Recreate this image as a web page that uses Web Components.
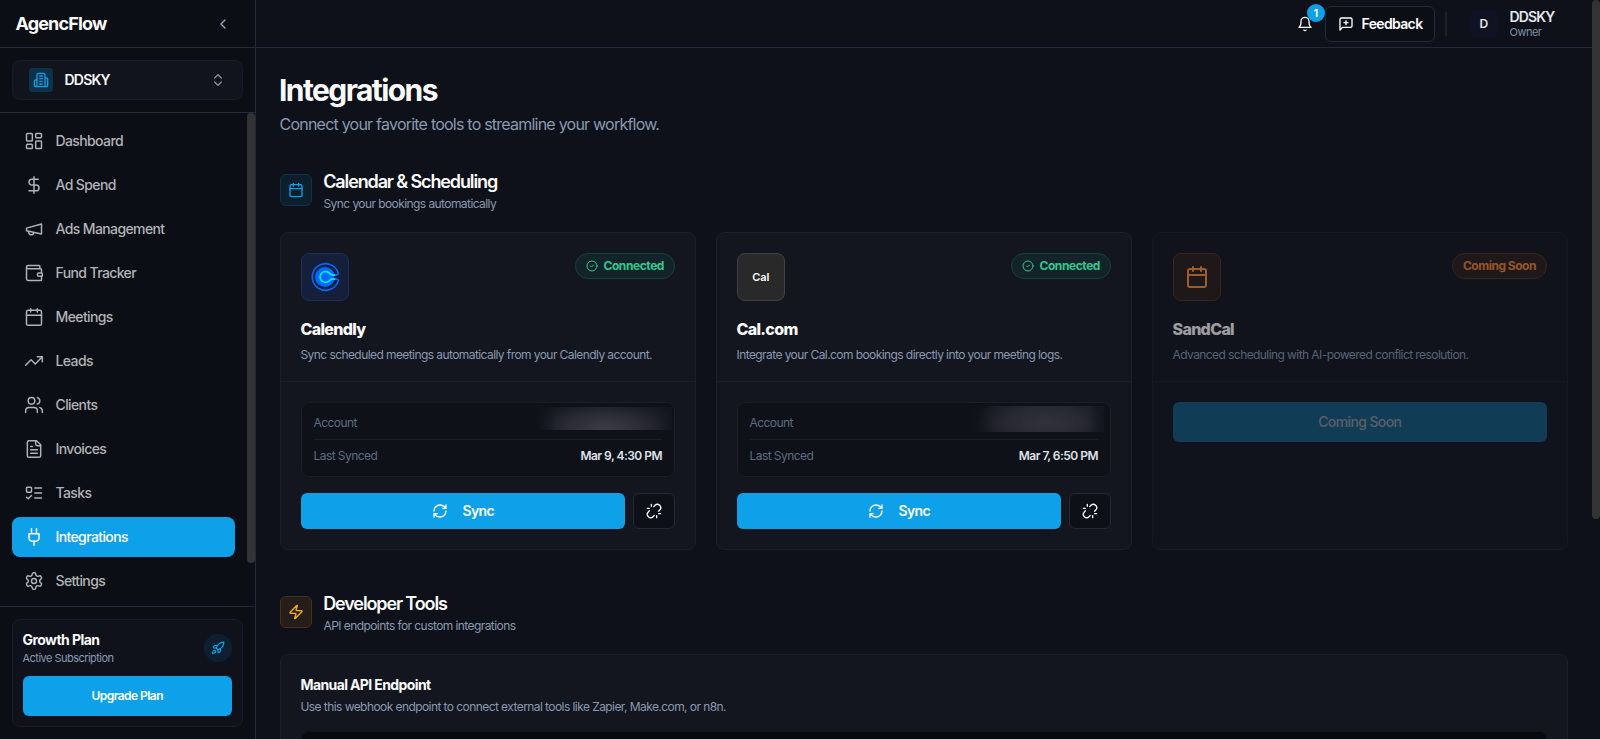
<!DOCTYPE html>
<html lang="en">
<head>
<meta charset="utf-8">
<title>AgencFlow – Integrations</title>
<style>
html,body{margin:0;height:100%;overflow:hidden}
body{background:#0e1119;color:#fafafa;font-family:Inter,"Liberation Sans",sans-serif;font-size:14px;line-height:20px;letter-spacing:-.046em;text-indent:-.5px}
</style>
</head>
<body>
<app-shell></app-shell>
<script>
const ICONS={
dashboard:'<rect width="7" height="9" x="3" y="3" rx="1"/><rect width="7" height="5" x="14" y="3" rx="1"/><rect width="7" height="9" x="14" y="12" rx="1"/><rect width="7" height="5" x="3" y="16" rx="1"/>',
dollar:'<path d="M12 2v20M17 5H9.5a3.5 3.5 0 0 0 0 7h5a3.5 3.5 0 0 1 0 7H6"/>',
megaphone:'<path d="m3 11 18-5v12L3 14v-3z"/><path d="M11.6 16.8a3 3 0 1 1-5.8-1.6"/>',
wallet:'<path d="M19 7V4a1 1 0 0 0-1-1H5a2 2 0 0 0 0 4h15a1 1 0 0 1 1 1v4h-3a2 2 0 0 0 0 4h3a1 1 0 0 0 1-1v-2a1 1 0 0 0-1-1"/><path d="M3 5v14a2 2 0 0 0 2 2h15a1 1 0 0 0 1-1v-4"/>',
calendar:'<path d="M8 2v4M16 2v4M3 10h18"/><rect width="18" height="18" x="3" y="4" rx="2"/>',
trending:'<path d="M22 7 13.5 15.5 8.5 10.5 2 17"/><path d="M16 7h6v6"/>',
users:'<path d="M16 21v-2a4 4 0 0 0-4-4H6a4 4 0 0 0-4 4v2"/><circle cx="9" cy="7" r="4"/><path d="M22 21v-2a4 4 0 0 0-3-3.87M16 3.13a4 4 0 0 1 0 7.75"/>',
file:'<path d="M15 2H6a2 2 0 0 0-2 2v16a2 2 0 0 0 2 2h12a2 2 0 0 0 2-2V7Z"/><path d="M14 2v4a2 2 0 0 0 2 2h4M10 9H8M16 13H8M16 17H8"/>',
todo:'<rect x="3" y="5" width="6" height="6" rx="1"/><path d="m3 17 2 2 4-4M13 6h8M13 12h8M13 18h8"/>',
plug:'<path d="M12 22v-5M9 8V2M15 8V2M18 8v5a4 4 0 0 1-4 4h-4a4 4 0 0 1-4-4V8Z"/>',
settings:'<path d="M12.22 2h-.44a2 2 0 0 0-2 2v.18a2 2 0 0 1-1 1.73l-.43.25a2 2 0 0 1-2 0l-.15-.08a2 2 0 0 0-2.73.73l-.22.38a2 2 0 0 0 .73 2.73l.15.1a2 2 0 0 1 1 1.72v.51a2 2 0 0 1-1 1.74l-.15.09a2 2 0 0 0-.73 2.73l.22.38a2 2 0 0 0 2.73.73l.15-.08a2 2 0 0 1 2 0l.43.25a2 2 0 0 1 1 1.73V20a2 2 0 0 0 2 2h.44a2 2 0 0 0 2-2v-.18a2 2 0 0 1 1-1.73l.43-.25a2 2 0 0 1 2 0l.15.08a2 2 0 0 0 2.73-.73l.22-.39a2 2 0 0 0-.73-2.73l-.15-.08a2 2 0 0 1-1-1.74v-.5a2 2 0 0 1 1-1.74l.15-.09a2 2 0 0 0 .73-2.73l-.22-.38a2 2 0 0 0-2.73-.73l-.15.08a2 2 0 0 1-2 0l-.43-.25a2 2 0 0 1-1-1.73V4a2 2 0 0 0-2-2z"/><circle cx="12" cy="12" r="3"/>',
building:'<path d="M6 22V4a2 2 0 0 1 2-2h8a2 2 0 0 1 2 2v18ZM6 12H4a2 2 0 0 0-2 2v6a2 2 0 0 0 2 2h2M18 9h2a2 2 0 0 1 2 2v9a2 2 0 0 1-2 2h-2M10 6h4M10 10h4M10 14h4M10 18h4"/>',
left:'<path d="m15 18-6-6 6-6"/>',
updown:'<path d="m7 15 5 5 5-5M7 9l5-5 5 5"/>',
rocket:'<path d="M4.5 16.5c-1.5 1.26-2 5-2 5s3.74-.5 5-2c.71-.84.7-2.13-.09-2.91a2.18 2.18 0 0 0-2.91-.09zM12 15l-3-3a22 22 0 0 1 2-3.95A12.88 12.88 0 0 1 22 2c0 2.72-.78 7.5-6 11a22.35 22.35 0 0 1-4 2z"/><path d="M9 12H4s.55-3.03 2-4c1.62-1.08 5 0 5 0M12 15v5s3.03-.55 4-2c1.08-1.62 0-5 0-5"/>',
bell:'<path d="M6 8a6 6 0 0 1 12 0c0 7 3 9 3 9H3s3-2 3-9M10.3 21a1.94 1.94 0 0 0 3.4 0"/>',
feedback:'<path d="M21 15a2 2 0 0 1-2 2H7l-4 4V5a2 2 0 0 1 2-2h14a2 2 0 0 1 2 2zM12 7v6M9 10h6"/>',
refresh:'<path d="M3 12a9 9 0 0 1 9-9 9.75 9.75 0 0 1 6.74 2.74L21 8M21 3v5h-5M21 12a9 9 0 0 1-9 9 9.75 9.75 0 0 1-6.74-2.74L3 16M8 16H3v5"/>',
unlink:'<path d="m18.84 12.25 1.72-1.71h-.02a5.004 5.004 0 0 0-.12-7.07 5.006 5.006 0 0 0-6.95 0l-1.72 1.71M5.17 11.75l-1.71 1.71a5.004 5.004 0 0 0 .12 7.07 5.006 5.006 0 0 0 6.95 0l1.71-1.71M8 2v3M2 8h3M16 19v3M19 16h3"/>',
zap:'<path d="M4 14a1 1 0 0 1-.78-1.63l9.9-10.2a.5.5 0 0 1 .86.46l-1.92 6.02A1 1 0 0 0 13 10h7a1 1 0 0 1 .78 1.63l-9.9 10.2a.5.5 0 0 1-.86-.46l1.92-6.02A1 1 0 0 0 11 14z"/>',
check:'<circle cx="12" cy="12" r="10"/><path d="m9 12 2 2 4-4"/>'
};

/* Small helper: every component provides its own styles and markup. */
const define=(name,css,html)=>customElements.define(name,class extends HTMLElement{
  connectedCallback(){
    if(this.shadowRoot)return;
    const attr=(k,d='')=>this.getAttribute(k)??d;
    this.attachShadow({mode:'open'}).innerHTML=`<style>*{box-sizing:border-box}:host{box-sizing:border-box}${css}</style>${typeof html==='function'?html(attr):html}`;
  }
});

define('ui-icon',':host{display:block;flex:none}svg{display:block;fill:none;stroke:currentColor;stroke-linecap:round;stroke-linejoin:round}',
a=>`<svg width="${a('size','16')}" height="${a('size','16')}" viewBox="0 0 24 24" stroke-width="${a('stroke','2')}">${ICONS[a('name')]}</svg>`);

define('scroll-thumb',':host{display:block;width:8px;flex:none}div{width:8px;border-radius:4px;background:#333}',
a=>`<div style="height:${a('length')}px"></div>`);

define('nav-item',`:host{display:flex;flex:none;align-items:center;gap:12px;height:40px;padding:0 12px;border-radius:8px;color:#b2b3b6;font-weight:500;letter-spacing:-.044em}
:host([active]){background:#0ea1e9;color:#fff}`,
a=>`<ui-icon name="${a('icon')}" size="20" stroke="1.75"></ui-icon><span><slot></slot></span>`);

define('ui-button',`:host{display:flex;align-items:center;justify-content:center;height:40px;border-radius:6px;background:#0ea1e9;color:#fff;font-weight:600}`,'<slot></slot>');

define('workspace-picker',`:host{display:block;padding:12px;border-bottom:1px solid #212b3b}
.box{display:flex;align-items:center;height:40px;padding:0 16px;border:1px solid #1b1c2b;border-radius:8px;background:#11131d}
.ic{display:grid;place-items:center;width:24px;height:24px;border-radius:4px;background:#0c3148;color:#0ea1e9}
.n{flex:1;margin-left:12px;font-weight:600;letter-spacing:-.056em}
.ud{color:#8d8e94}`,
'<div class="box"><div class="ic"><ui-icon name="building"></ui-icon></div><div class="n">DDSKY</div><ui-icon class="ud" name="updown"></ui-icon></div>');

define('plan-card',`:host{display:block;padding:12px;border-top:1px solid #212b3b}
.box{border:1px solid #1b1c2b;border-radius:8px;background:#10121b;padding:10px}
.row{display:flex;justify-content:space-between;align-items:center;height:36px;margin-bottom:10px}
.t{font-weight:700;line-height:20px;letter-spacing:-.0395em}
.s{font-size:11px;line-height:16px;color:#8999af;letter-spacing:-.048em}
.r{display:grid;place-items:center;width:28px;height:28px;border-radius:50%;background:#0e202f;color:#0ea1e9}
ui-button{font-size:12px;letter-spacing:-.046em}`,
'<div class="box"><div class="row"><div><div class="t">Growth Plan</div><div class="s">Active Subscription</div></div><div class="r"><ui-icon name="rocket" size="14"></ui-icon></div></div><ui-button>Upgrade Plan</ui-button></div>');

define('side-bar',`:host{display:flex;flex-direction:column;width:256px;flex:none;background:#0b0e15;border-right:1px solid #212b3b}
.brand{display:flex;align-items:center;justify-content:space-between;height:48px;padding:0 24px 0 16px;border-bottom:1px solid #212b3b}
.brand b{font-size:18px;font-weight:700;letter-spacing:-.047em}
.brand ui-icon{color:#94a3b8}
.mid{flex:1;display:flex;min-height:0;overflow:hidden}
nav{flex:1;display:flex;flex-direction:column;gap:4px;padding:8px 12px}`,
`<div class="brand"><b>AgencFlow</b><ui-icon name="left"></ui-icon></div>
<workspace-picker></workspace-picker>
<div class="mid"><nav>
<nav-item icon="dashboard">Dashboard</nav-item>
<nav-item icon="dollar">Ad Spend</nav-item>
<nav-item icon="megaphone">Ads Management</nav-item>
<nav-item icon="wallet">Fund Tracker</nav-item>
<nav-item icon="calendar">Meetings</nav-item>
<nav-item icon="trending">Leads</nav-item>
<nav-item icon="users">Clients</nav-item>
<nav-item icon="file">Invoices</nav-item>
<nav-item icon="todo">Tasks</nav-item>
<nav-item icon="plug" active>Integrations</nav-item>
<nav-item icon="settings">Settings</nav-item>
</nav><scroll-thumb length="450"></scroll-thumb></div>
<plan-card></plan-card>`);

define('top-bar',`:host{display:flex;align-items:center;justify-content:flex-end;height:48px;padding-right:37px;border-bottom:1px solid #212b3b}
.bell{position:relative;padding:8px;margin-right:4px}
.badge{position:absolute;top:-4px;left:18px;width:18px;height:18px;border-radius:50%;background:#0ea1e9;color:#fff;font-size:10px;font-weight:700;line-height:18px;text-align:center;letter-spacing:0;text-indent:0}
.fb{display:flex;align-items:center;gap:8px;height:36px;width:110px;padding:0 12px;border:1px solid #212b3b;border-radius:6px;background:#0b0e15;font-weight:600;letter-spacing:-.046em;color:#fff}
.sep{width:2px;height:24px;margin:0 23px 0 10px;background:#1b222e}
.av{display:grid;place-items:center;width:28px;height:28px;border-radius:4px;background:#0f1223;font-size:12px;font-weight:600;letter-spacing:0;color:#e4e6ea}
.u{margin-left:12px;width:45px;padding-top:1px}
.u b{display:block;font-weight:600;line-height:17px;letter-spacing:-.06em;color:#e6e8ec}
.u span{display:block;font-size:11px;line-height:15px;color:#7f8ea3;letter-spacing:-.046em}`,
`<div class="bell"><ui-icon name="bell"></ui-icon><div class="badge">1</div></div>
<div class="fb"><ui-icon name="feedback"></ui-icon><span>Feedback</span></div>
<div class="sep"></div><div class="av">D</div><div class="u"><b>DDSKY</b><span>Owner</span></div>`);

define('section-head',`:host{display:flex;align-items:center;gap:12px;height:44px;margin-bottom:20px}
.ic{display:grid;place-items:center;width:32px;height:32px;border-radius:6px;border:1px solid #0d3449;background:#0d1e2c;color:#0ea1e9}
:host([tone=amber]) .ic{border-color:#45321a;background:#241d19;color:#f8b01e}
h2{margin:0;font-size:18px;font-weight:600;line-height:28px;letter-spacing:-.0625em;text-indent:-.8px}
p{margin:0;font-size:12px;line-height:16px;color:#8999af;letter-spacing:-.048em}`,
a=>`<div class="ic"><ui-icon name="${a('icon')}"></ui-icon></div><div><h2><slot></slot></h2><p><slot name="sub"></slot></p></div>`);

define('status-pill',`:host{display:flex;align-items:center;gap:6px;height:26px;padding:0 10px;border-radius:13px;border:1px solid #14433f;background:#122429;color:#34c98f;font-size:12px;font-weight:700;letter-spacing:-.036em}
:host([tone=orange]){border-color:#5c3018;background:#2b1d1c;color:#ed8430;letter-spacing:-.04em}`,'<slot></slot>');

define('app-logo',`:host{display:grid;place-items:center;width:48px;height:48px;border-radius:8px;border:1px solid #1b3059;background:#151f3a}
:host([kind=cal]){background:#292929;border-color:#414144}
:host([kind=sand]){background:#2b1d1b;border-color:#5c3018;color:#ff8f33}
svg{display:block}.w{font-size:11px;font-weight:600;letter-spacing:-.01em;line-height:16px}`,
a=>({calendly:`<svg width="46" height="46" viewBox="1 1 46 46" fill="none" stroke-linecap="round" stroke-linejoin="round"><circle cx="24" cy="24" r="10" fill="#006bff"/><path d="M33 21.2 40 20v7.8l-7-1.2z" fill="#151f3a"/><path d="M34.3 21.9c-2 .7-3.5.3-4.9-.9C28.2 19.900 27 18.700 25 18.700h-.7a5.300 5.300 0 0 0 0 10.600h.7c2 0 3.200-1.200 4.400-2.300 1.400-1.200 2.900-1.600 4.900-.9" stroke="#0ae8f0" stroke-width="1.7"/><path d="M34.600 21.800q2.800.4 2.700-1.600A13.300 13.300 0 1 0 37.300 27.800q.1-2-2.700-1.600" stroke="#006bff" stroke-width="1.5"/></svg>`,
cal:'<span class="w">Cal</span>',sand:'<ui-icon name="calendar" size="24"></ui-icon>'})[a('kind')]);

define('integration-card',`:host{display:flex;flex-direction:column;height:318px;border:1px solid #1c1e2a;border-radius:8px;background:#13151f}
:host([dim]){opacity:.6}
.h{box-sizing:content-box;height:128px;padding:20px 20px 0;border-bottom:1px solid #1c1e2a}
.top{display:flex;justify-content:space-between;align-items:flex-start;height:48px;margin-bottom:16px}
h3{margin:0 0 4px;font-size:16px;line-height:24px;font-weight:800;letter-spacing:-.042em}
p{margin:0;font-size:12px;line-height:20px;color:#8999af;letter-spacing:-.048em;white-space:nowrap}
.b{padding:20px}`,
a=>`<div class="h"><div class="top"><app-logo kind="${a('kind')}"></app-logo><slot name="status"></slot></div><h3>${a('name')}</h3><p>${a('desc')}</p></div><div class="b"><slot></slot></div>`);

define('sync-panel',`:host{display:block}
.info{position:relative;height:75px;padding:12px;border:1px solid #1b1d28;border-radius:8px;background:#0f1119;font-size:12px;line-height:16px;color:#5d6b80;letter-spacing:-.047em}
.r{display:flex;justify-content:space-between}
.r+.r{margin-top:8px;padding-top:8px;border-top:1px solid #1b1d28}
.r b{font-weight:600;color:#dfe1e8;letter-spacing:-.0435em}
.hid{position:absolute}
.act{display:flex;gap:8px;margin-top:16px}
ui-button{flex:1;height:36px;letter-spacing:-.046em}
.act ui-icon.s{margin-right:15px}
.un{display:grid;place-items:center;width:42px;height:36px;border:1px solid #252731;border-radius:6px;background:#0d1018}`,
a=>`<div class="info"><div class="r"><span>Account</span><div class="hid" style="${a('mask')}"></div></div><div class="r"><span>Last Synced</span><b>${a('synced')}</b></div></div>
<div class="act"><ui-button><ui-icon class="s" name="refresh"></ui-icon>Sync</ui-button><div class="un"><ui-icon name="unlink"></ui-icon></div></div>`);

define('endpoint-card',`:host{display:block;height:200px;padding:20px;border:1px solid #1c1e2a;border-radius:8px;background:#13151f}
h3{margin:0 0 4px;font-size:14px;line-height:20px;font-weight:700;letter-spacing:-.044em}
p{margin:0 0 16px;font-size:12px;line-height:16px;color:#8999af;letter-spacing:-.0475em}
.code{height:80px;border:1px solid #12141d;border-radius:8px;background:#07090f}`,
'<h3>Manual API Endpoint</h3><p>Use this webhook endpoint to connect external tools like Zapier, Make.com, or n8n.</p><div class="code"></div>');

define('integrations-page',`:host{display:block;padding:24px}
h1{margin:0 0 4px;font-size:30px;line-height:36px;font-weight:700;letter-spacing:-.0525em;text-indent:-1px}
.lead{margin:0 0 32px;font-size:16px;line-height:24px;color:#8999af;letter-spacing:-.0483em}
.grid{display:grid;grid-template-columns:repeat(3,1fr);gap:20px;margin-bottom:40px}
.soon{height:40px;background:#12597f;font-weight:500;letter-spacing:-.044em;color:#92949a}`,
`<h1>Integrations</h1><p class="lead">Connect your favorite tools to streamline your workflow.</p>
<section-head icon="calendar">Calendar &amp; Scheduling<span slot="sub">Sync your bookings automatically</span></section-head>
<div class="grid">
<integration-card kind="calendly" name="Calendly" desc="Sync scheduled meetings automatically from your Calendly account."><status-pill slot="status"><ui-icon name="check" size="12"></ui-icon>Connected</status-pill><sync-panel synced="Mar 9, 4:30 PM" mask="right:2px;top:4px;width:137px;height:23px;background:linear-gradient(90deg,#0f1119,transparent 16%,transparent 88%,#14161f),radial-gradient(ellipse 80px 32px at 51% 95%,#3b3c45 0%,#2b2c36 45%,#1b1c26 80%,#14161f 100%)"></sync-panel></integration-card>
<integration-card kind="cal" name="Cal.com" desc="Integrate your Cal.com bookings directly into your meeting logs."><status-pill slot="status"><ui-icon name="check" size="12"></ui-icon>Connected</status-pill><sync-panel synced="Mar 7, 6:50 PM" mask="right:6px;top:3px;width:133px;height:26px;background:linear-gradient(90deg,#0f1119,transparent 16%,transparent 88%,#14161f),radial-gradient(ellipse 80px 34px at 56% 65%,#31323b 0%,#282932 45%,#1a1b25 80%,#11131b 100%)"></sync-panel></integration-card>
<integration-card dim kind="sand" name="SandCal" desc="Advanced scheduling with AI-powered conflict resolution."><status-pill slot="status" tone="orange">Coming Soon</status-pill><ui-button class="soon">Coming Soon</ui-button></integration-card>
</div>
<section-head icon="zap" tone="amber">Developer Tools<span slot="sub">API endpoints for custom integrations</span></section-head>
<endpoint-card></endpoint-card>`);

define('app-shell',`:host{display:flex;height:100vh;overflow:hidden}
main{flex:1;min-width:0;overflow:hidden}`,
`<side-bar></side-bar><main><top-bar></top-bar><integrations-page></integrations-page></main><scroll-thumb length="519"></scroll-thumb>`);
</script>
</body>
</html>
